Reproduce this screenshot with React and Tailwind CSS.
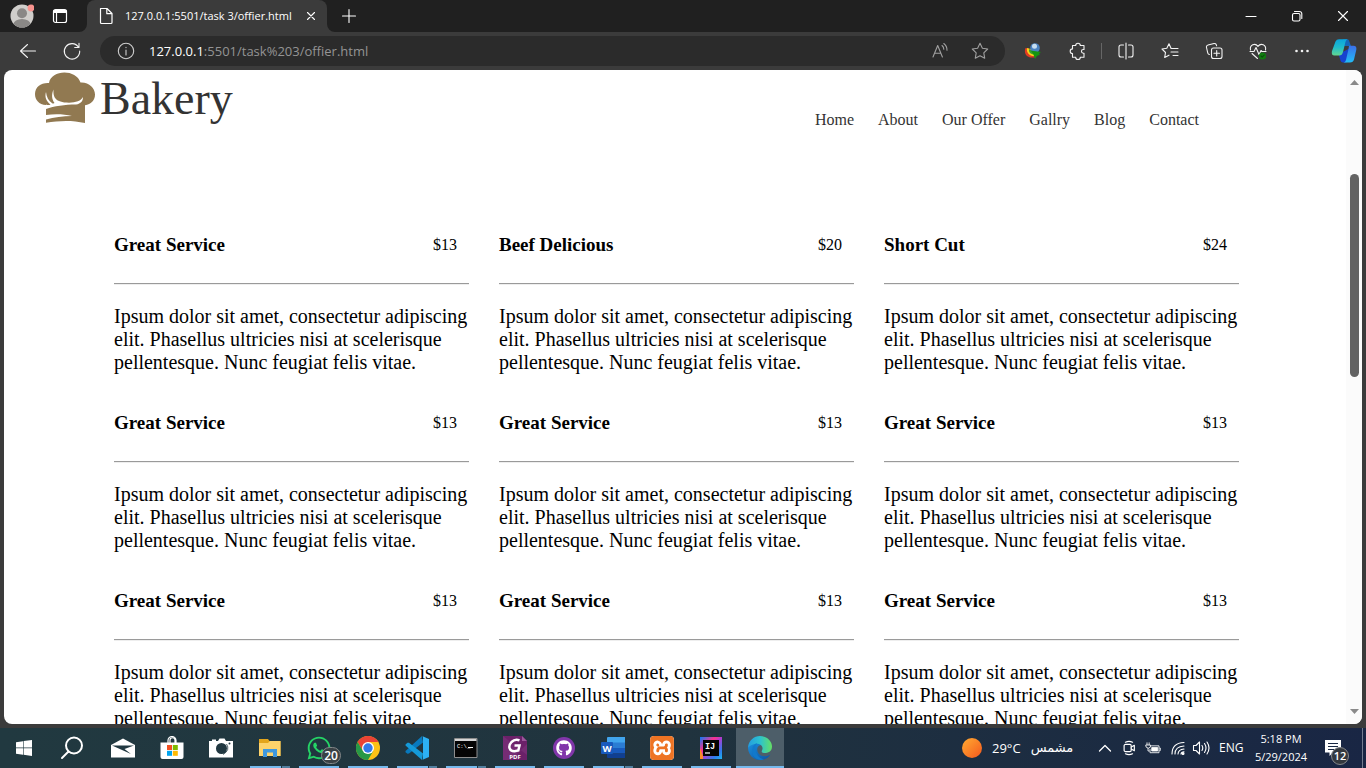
import React from "react";
import { FaGithub, FaWhatsapp } from "react-icons/fa";
import { SiXampp } from "react-icons/si";

const blurb =
  "Ipsum dolor sit amet, consectetur adipiscing elit. Phasellus ultricies nisi at scelerisque pellentesque. Nunc feugiat felis vitae.";

const offers = [
  ["Great Service", "$13"],
  ["Beef Delicious", "$20"],
  ["Short Cut", "$24"],
  ["Great Service", "$13"],
  ["Great Service", "$13"],
  ["Great Service", "$13"],
  ["Great Service", "$13"],
  ["Great Service", "$13"],
  ["Great Service", "$13"],
];

const navItems = ["Home", "About", "Our Offer", "Gallry", "Blog", "Contact"];

function Line({ children, className = "size-5", box = "0 0 20 20", width = 1.1 }) {
  return (
    <svg
      viewBox={box}
      className={className}
      fill="none"
      stroke="currentColor"
      strokeWidth={width}
      strokeLinecap="round"
      strokeLinejoin="round"
      aria-hidden="true"
    >
      {children}
    </svg>
  );
}

function IconButton({ label, className, children }) {
  return (
    <button type="button" aria-label={label} className={`flex shrink-0 items-center justify-center ${className}`}>
      {children}
    </button>
  );
}

function TabStrip() {
  return (
    <div className="flex h-8 shrink-0 bg-[#202020] text-white">
      <div className="flex w-[79px] shrink-0 items-center">
        <IconButton label="Profile" className="ml-2.5 size-6">
          <svg viewBox="0 0 24 24" className="size-6">
            <clipPath id="avatar">
              <circle cx="12" cy="12" r="11.5" />
            </clipPath>
            <circle cx="12" cy="12" r="11.5" fill="#d0cecb" />
            <g clipPath="url(#avatar)" fill="#8a8886">
              <circle cx="12" cy="9.2" r="5" />
              <ellipse cx="12" cy="20.5" rx="8.500" ry="5.500" />
            </g>
            <circle cx="21" cy="4" r="3.400" fill="#f8938e" />
          </svg>
        </IconButton>
        <IconButton label="Tab actions" className="ml-4 size-5">
          <Line className="size-5" width={1.2}>
            <rect x="3.500" y="3.500" width="13" height="13" rx="2" />
            <path d="M4.500 5.500h11" strokeWidth="3" />
            <path d="M6.500 7v9" />
          </Line>
        </IconButton>
      </div>
      <svg viewBox="0 0 8 8" className="size-2 shrink-0 self-end" fill="#3b3b3b">
        <path d="M8 0v8H0a8 8 0 0 0 8-8z" />
      </svg>
      <div className="flex w-60 shrink-0 items-center rounded-t-lg bg-[#3b3b3b] pr-2 pl-2.5">
        <Line className="size-[18px] shrink-0" box="0 0 18 18" width={1.2}>
          <path d="M3.500 1.500h6.500l5 5v9a1 1 0 0 1-1 1H4.500a1 1 0 0 1-1-1zM9.800 1.500v5.200H15" />
        </Line>
        <span className="ml-2.5 flex-1 text-[11px] leading-4 whitespace-nowrap">127.0.0.1:5501/task 3/offier.html</span>
        <IconButton label="Close tab" className="size-4">
          <Line className="size-4" box="0 0 16 16">
            <path d="M4.500 4.500l7 7M11.500 4.500l-7 7" />
          </Line>
        </IconButton>
      </div>
      <svg viewBox="0 0 8 8" className="size-2 shrink-0 self-end" fill="#3b3b3b">
        <path d="M0 0v8h8a8 8 0 0 1-8-8z" />
      </svg>
      <IconButton label="New tab" className="w-7">
        <Line className="size-4" box="0 0 16 16">
          <path d="M8 1.500v13M1.500 8h13" />
        </Line>
      </IconButton>
      <div className="flex-1" />
      <IconButton label="Minimize" className="w-[46px]">
        <Line className="size-3" box="0 0 12 12">
          <path d="M1 6.500h10" />
        </Line>
      </IconButton>
      <IconButton label="Restore" className="w-[46px]">
        <Line className="size-3" box="0 0 12 12">
          <rect x="1.500" y="3.500" width="7.500" height="7.500" rx="1.500" />
          <path d="M3.500 1.500H8.500a2.300 2.300 0 0 1 2.300 2.300V8.500" />
        </Line>
      </IconButton>
      <IconButton label="Close" className="w-[46px]">
        <Line className="size-3" box="0 0 12 12">
          <path d="M1.500 1.500l9 9M10.500 1.500l-9 9" />
        </Line>
      </IconButton>
    </div>
  );
}

const star =
  "M10 2.300l2.400 4.900 5.300.8-3.900 3.800.9 5.400L10 14.700l-4.700 2.500.9-5.400L2.300 8l5.300-.8z";

function Toolbar() {
  return (
    <div className="flex h-[38px] shrink-0 items-center bg-[#3b3b3b] text-[#f3f3f3]">
      <IconButton label="Back" className="ml-[17px] size-[22px]">
        <Line className="size-[22px]" box="0 0 22 22">
          <path d="M18.500 11H3.500M10.500 4.500L3.500 11l7 6.500" />
        </Line>
      </IconButton>
      <IconButton label="Refresh" className="ml-[22px] size-[22px]">
        <Line className="size-[22px]" box="0 0 22 22">
          <path d="M17.500 7.200A7.700 7.700 0 1 0 18.700 11M18 3.200v4.300h-4.300" />
        </Line>
      </IconButton>
      <div className="mr-3.5 ml-[17px] flex h-[30px] min-w-0 flex-1 items-center rounded-full bg-[#2b2b2b] pr-[15px] pl-4">
        <IconButton label="Site information" className="size-5 text-[#cfcfcf]">
          <Line>
            <circle cx="10" cy="10" r="7.700" />
            <path d="M10 9v5M10 6.200v.4" />
          </Line>
        </IconButton>
        <p className="ml-[13px] flex-1 truncate text-[13px] leading-5 text-[#949494]">
          <span className="text-white">127.0.0.1</span>:5501/task%203/offier.html
        </p>
        <IconButton label="Read aloud" className="size-5 text-[#a0a0a0]">
          <Line>
            <path d="M3 16L7.700 4.500 12.400 16M4.600 12.200h6.200M12 4.500c1.200.9 1.800 2.100 1.800 3.800M13.800 2.500c2 1.500 3.200 3.600 3.200 6.700" />
          </Line>
        </IconButton>
        <IconButton label="Add to favorites" className="ml-5 size-5 text-[#a0a0a0]">
          <Line>
            <path d={star} />
          </Line>
        </IconButton>
      </div>
      <IconButton label="Download manager" className="ml-1 size-5">
        <svg viewBox="0 0 20 20" className="size-5">
          <path d="M2.500 7C0 13 5 18.500 13 16l-1-4-4 .5-2-5z" fill="#e23c22" />
          <path d="M4 7c-1 5 3 8.500 8 8l-.5-3-3-1-1-3z" fill="#f8d21c" />
          <path d="M6 8c-.5 4 2 5.500 6 5.500l-.5-3-3-1z" fill="#3aa32a" />
          <circle cx="12" cy="7" r="4.800" fill="#4a82c0" />
          <circle cx="11.500" cy="5.300" r="2.500" fill="#c6def0" />
          <path d="M7.500 9.500l10.500 1.500-2 1.500 1 1-3 1.500-2 3-1.500-4.500z" fill="#169510" />
        </svg>
      </IconButton>
      <IconButton label="Extensions" className="ml-[25px] size-5">
        <Line>
          <path d="M7.700 4.500a2.300 2.300 0 0 1 4.600 0H16v4h-.7a1.800 1.800 0 0 0 0 3.700h.7v4h-3.700a2.300 2.300 0 0 1-4.600 0H4.500v-3.700a2.300 2.300 0 0 1 0-4.600V4.500z" />
        </Line>
      </IconButton>
      <div className="ml-[13px] h-4 w-px bg-[#666]" />
      <IconButton label="Split screen" className="ml-3.5 size-5">
        <Line>
          <path d="M7.500 4H5a2 2 0 0 0-2 2v8a2 2 0 0 0 2 2h2.500M12.500 4H15a2 2 0 0 1 2 2v8a2 2 0 0 1-2 2h-2.500M10 2v16" />
        </Line>
      </IconButton>
      <IconButton label="Favorites" className="ml-6 size-5">
        <Line>
          <path d="M11 7.300L9 2.800 6.800 7.200l-4.800.8 3.500 3.500-.8 5L9 14.200M11 7.500h7M11 11h7M13 14.500h5" />
        </Line>
      </IconButton>
      <IconButton label="Collections" className="ml-6 size-5">
        <Line>
          <rect x="7.500" y="7" width="10.500" height="10.500" rx="2" />
          <path d="M12.700 9.500v5.500M10 12.200h5.500M5.500 13.500a2 2 0 0 1-1.700-1.400L2.500 6.500A2 2 0 0 1 4 4l6-1.500a2 2 0 0 1 2.400 1.500l.2.800" />
        </Line>
      </IconButton>
      <IconButton label="Browser essentials" className="ml-6 size-5">
        <Line>
          <path d="M2.500 9C1.500 4 7 1.500 10 5.300 13 1.500 18.500 4 17.500 9M2 10.500h4l2-4 3 7 2-4 1 1h4M4 12.500l5.500 5" />
          <circle cx="14.500" cy="15" r="3.600" fill="#107c10" stroke="none" />
          <path d="M13 15l1.200 1.200 2-2.200" stroke="#0a4d0a" />
        </Line>
      </IconButton>
      <IconButton label="Settings and more" className="ml-6 size-5">
        <svg viewBox="0 0 20 20" className="size-5" fill="currentColor">
          <circle cx="4.500" cy="10" r="1.300" />
          <circle cx="10" cy="10" r="1.300" />
          <circle cx="15.500" cy="10" r="1.300" />
        </svg>
      </IconButton>
      <IconButton label="Copilot" className="mr-[9px] ml-[19px] size-[26px]">
        <svg viewBox="0 0 26 26" className="size-[26px]">
          <defs>
            <linearGradient id="copA" x1="0" y1="0" x2="0" y2="1">
              <stop offset="0" stopColor="#0aa5dd" />
              <stop offset=".5" stopColor="#20bccb" />
              <stop offset="1" stopColor="#62d68f" />
            </linearGradient>
            <linearGradient id="copB" x1="0" y1="0" x2="0" y2="1">
              <stop offset="0" stopColor="#3b6fe8" />
              <stop offset="1" stopColor="#22bdf7" />
            </linearGradient>
          </defs>
          <path d="M7.500 16l2 6.500q.6 2 2.500 2h3.500l3-14z" fill="#1743cf" />
          <path d="M13 8h7l-2-5.500q-.5-1.200-2-1.200h-4z" fill="#1467b9" />
          <path d="M4.500 3.500Q5.500 1.200 8 1.200h8.500q-1.500.5-2 2.500L12 14q-.8 3.500-4 3.500H3.500Q0 17.500 1 13z" fill="url(#copA)" />
          <path d="M18 7.800h4.500q3.500 0 2.800 4L23 21.500q-.8 3-4 3h-6.500q2-.5 2.500-2.500L17.500 11z" fill="url(#copB)" />
        </svg>
      </IconButton>
    </div>
  );
}

function BakeryLogo() {
  return (
    <a href="#home" aria-label="Bakery" className="flex items-center">
      <svg viewBox="0 0 62 53" className="h-[53px] w-[62px]" fill="#917951">
        <path d="M15 11C17-2.500 42-3.500 46.500 10.500 55 10 61 16 61 22.500c0 6-4 10-10 10.800V51c-13-3-26-2.500-39-.2V33C5 32.500 1 28 1 22 1 15 7 10.500 15 11z" />
        <path
          d="M19.500 17.500C19 25 21 30.500 35 30.700c7 0 12-2 14-5.700 0 4-2 6.800-7 7.500-11 0-22 1.500-30 4.500v-4.500c1.500.8 3 .8 4.500 0C12 29 10.500 25 12 20c.5 5 2.500 9 6.500 11.500q1 0 2-.5c-3-4-3-9-1-13.500z"
          fill="#fff"
        />
        <path d="M12 43c9-1.500 18-1 26 1-9 .3-18 1.300-26 3.500z" fill="#fff" />
      </svg>
      <span className="ml-1 font-['Liberation_Serif',serif] text-[46px] leading-[52px] text-[#333]">Bakery</span>
    </a>
  );
}

function OfferCard({ title, price }) {
  return (
    <article>
      <div className="flex items-center justify-between pr-3">
        <h3 className="text-[19px] leading-[22px] font-bold">{title}</h3>
        <span className="text-base leading-[22px]">{price}</span>
      </div>
      <hr className="mt-[27px] mb-5 h-0.5 border-t border-b border-t-[#9a9a9a] border-b-[#eee]" />
      <p className="text-[20px] leading-[23px]">{blurb}</p>
    </article>
  );
}

function WebPage() {
  return (
    <div className="flex min-h-0 flex-1 overflow-hidden rounded-lg bg-white">
      <div className="min-w-0 flex-1 overflow-hidden font-['Liberation_Serif',serif] text-black">
        <header className="flex items-start justify-between pt-0.5 pr-[147px] pl-[30px]">
          <BakeryLogo />
          <nav className="flex gap-6 pt-9 text-base leading-6 text-[#333]">
            {navItems.map((n) => (
              <a key={n} href="#offer">
                {n}
              </a>
            ))}
          </nav>
        </header>
        <main className="grid grid-cols-3 gap-x-[30px] gap-y-[38px] pt-[102px] pr-[107px] pl-[110px]">
          {offers.map(([title, price], i) => (
            <OfferCard key={i} title={title} price={price} />
          ))}
        </main>
      </div>
      <div className="flex w-4 shrink-0 flex-col items-center bg-[#fbfbfb] py-2.5">
        <svg viewBox="0 0 9 5" className="h-[5px] w-[9px]" fill="#8a8a8a">
          <path d="M4.500 0L9 5H0z" />
        </svg>
        <div className="flex w-[9px] flex-1 flex-col pt-[89px]">
          <div className="h-[203px] rounded-full bg-[#636363]" />
        </div>
        <svg viewBox="0 0 9 5" className="h-[5px] w-[9px]" fill="#8a8a8a">
          <path d="M4.500 5L9 0H0z" />
        </svg>
      </div>
    </div>
  );
}

function Windows() {
  return (
    <svg viewBox="0 0 16 16" className="size-4" fill="#fff">
      <path d="M0 2.200L7 1.200v6.400H0zM7.600 1.100L16 0v7.600H7.600zM0 8.300h7v6.400l-7-1zM7.600 8.300H16V16l-8.400-1.200z" />
    </svg>
  );
}

function Search() {
  return (
    <Line className="size-6 text-white" box="0 0 24 24" width={2}>
      <circle cx="14" cy="9.500" r="8" />
      <path d="M8.500 15.500L2 22" />
    </Line>
  );
}

function Mail() {
  return (
    <svg viewBox="0 0 24 20" className="h-5 w-6" fill="#fff">
      <path d="M0 7L12 .5 24 7v12.500H0z" />
      <path d="M1 7.500h22L13.500 11l6.500 5z" fill="#213841" />
    </svg>
  );
}

function Store() {
  return (
    <svg viewBox="0 0 24 24" className="size-6">
      <path d="M8 8V4.500a4 4 0 0 1 8 0V8M10 7V4c0-3 5-3 5 0v3" fill="none" stroke="#fff" strokeWidth="1.200" />
      <path d="M.5 6.500h23V21q0 2-2 2h-19q-2 0-2-2z" fill="#fff" />
      <path d="M7 9h5v5H7z" fill="#f25022" />
      <path d="M12.800 9h5v5h-5z" fill="#7fba00" />
      <path d="M7 14.800h5v5H7z" fill="#00a4ef" />
      <path d="M12.800 14.800h5v5h-5z" fill="#ffb900" />
    </svg>
  );
}

function Camera() {
  return (
    <svg viewBox="0 0 24 20" className="h-5 w-6">
      <path d="M0 3h3V1.500h4V3h2L10.500.500h5L17 3h7v16.500H0z" fill="#fff" />
      <circle cx="12.500" cy="10.500" r="5.500" fill="#213841" />
      <path d="M17.500 6q4 6-3.500 10.500" fill="none" stroke="#213841" strokeWidth=".8" />
      <circle cx="20.500" cy="5.500" r="1" fill="#213841" />
    </svg>
  );
}

function Folder() {
  return (
    <svg viewBox="0 0 22 20" className="h-5 w-[22px]">
      <path d="M0 1h9l1.500 2H21.500v15H0z" fill="#e3a51c" />
      <path d="M0 5l9 0 2-2h10.500v15H0z" fill="#fdd36b" />
      <path d="M4 19v-8h14v8h-4v-4.500H8V19z" fill="#3f98dd" />
    </svg>
  );
}

function WhatsApp() {
  return (
    <span className="relative flex">
      <FaWhatsapp className="size-[26px] text-[#25d366]" />
      <span className="absolute top-3 left-[15px] flex h-[17px] w-5 items-center justify-center rounded-full border border-[#84888a] bg-[#3a4145] text-[12px] leading-4 font-semibold text-white">
        20
      </span>
    </span>
  );
}

function Chrome() {
  return (
    <svg viewBox="0 0 24 24" className="size-6">
      <circle cx="12" cy="12" r="12" fill="#fbc116" />
      <path d="M1.600 6A12 12 0 0 1 22.400 6H12L7 15z" fill="#ea4335" />
      <path d="M1.600 6A12 12 0 0 0 12 24l5.200-9L7 15z" fill="#279847" />
      <circle cx="12" cy="12" r="6" fill="#fff" />
      <circle cx="12" cy="12" r="4.700" fill="#3279ea" />
    </svg>
  );
}

function VsCode() {
  return (
    <svg viewBox="0 0 24 24" className="size-6">
      <path d="M17 0l1 6.500L4 17.500l-1.500.2L.5 16.200v-1.200L17 0z" fill="#0879bd" />
      <path d="M.5 8.500l2-1.700H4L18 17.500l-1 6.500L.5 9.500z" fill="#159ad8" />
      <path d="M17 0l7 3v18l-7 3q1 0 1-2V2q0-2-1-2z" fill="#2db1f4" />
    </svg>
  );
}

function Terminal() {
  return (
    <svg viewBox="0 0 24 20" className="h-5 w-6">
      <path d="M.5.500h22.500v19H.500z" fill="#050505" stroke="#8e8e8e" />
      <path d="M1 1h21.500v2H1z" fill="#d6d6d6" />
      <text x="3" y="9.500" fill="#fff" fontSize="5.500" fontFamily="Liberation Mono, monospace">C:\_</text>
      <path d="M14 9.500h5" stroke="#fff" />
    </svg>
  );
}

function PdfEditor() {
  return (
    <svg viewBox="0 0 24 24" className="size-6">
      <path d="M0 0h19l5 5v19H0z" fill="#6b2169" />
      <path d="M19 0v5h5z" fill="#9c569b" />
      <path d="M0 0l24 19V8L8 24H0z" fill="#8b438a" opacity=".35" />
      <path d="M16.500 4.300Q12 2.500 8.500 6c-4 4.500-2 9.500 3 9.300l3.800-.8 1.200-5h-5" fill="none" stroke="#fff" strokeWidth="2.500" />
      <text x="12" y="22.500" textAnchor="middle" fill="#fff" fontSize="6" fontWeight="bold" fontFamily="Open Sans, sans-serif">PDF</text>
    </svg>
  );
}

function GitHub() {
  return (
    <span className="flex size-[22px] items-center justify-center rounded-full bg-[#8136aa]">
      <FaGithub className="size-4 text-white" />
    </span>
  );
}

function Word() {
  return (
    <svg viewBox="0 0 24 22" className="h-[22px] w-6">
      <path d="M6 1q0-1 1-1h17v6H6z" fill="#41a5ee" />
      <path d="M6 5.500h18V11H6z" fill="#2b7cd3" />
      <path d="M6 11h18v5.500H6z" fill="#185abd" />
      <path d="M6 16.500h18V21H7q-1 0-1-1z" fill="#103f91" />
      <rect y="5" width="12" height="12" rx="1" fill="#185abd" />
      <text x="6" y="14.500" textAnchor="middle" fill="#fff" fontSize="9.500" fontWeight="bold" fontFamily="Open Sans, sans-serif">W</text>
    </svg>
  );
}

function Xampp() {
  return (
    <span className="flex size-6 items-center justify-center overflow-hidden rounded-sm bg-white">
      <SiXampp className="size-6 text-[#ee7424]" />
    </span>
  );
}

function IntelliJ() {
  return (
    <svg viewBox="0 0 22 22" className="size-[22px]">
      <defs>
        <linearGradient id="ij" x1="0" y1="0" x2="1" y2="1">
          <stop offset="0" stopColor="#087cfa" />
          <stop offset=".35" stopColor="#fc318c" />
          <stop offset=".5" stopColor="#b03bd0" />
          <stop offset=".8" stopColor="#2b7fef" />
          <stop offset="1" stopColor="#21b7ee" />
        </linearGradient>
      </defs>
      <path d="M0 0h22v22H0z" fill="url(#ij)" />
      <path d="M0 11l3 8v3H0z" fill="#fd8a28" />
      <path d="M3 3h16v16H3z" fill="#050505" />
      <text x="5" y="11.500" fill="#fff" fontSize="8.500" fontWeight="bold" fontFamily="Liberation Mono, monospace">IJ</text>
      <path d="M5 16h5" stroke="#fff" strokeWidth="1.200" />
    </svg>
  );
}

function Edge() {
  return (
    <svg viewBox="0 0 24 24" className="size-6">
      <defs>
        <linearGradient id="edgeTop" x1="0" y1=".5" x2="1" y2=".5">
          <stop offset="0" stopColor="#249de0" />
          <stop offset=".5" stopColor="#2cc2cf" />
          <stop offset="1" stopColor="#65df65" />
        </linearGradient>
        <linearGradient id="edgeLow" x1="0" y1="0" x2="1" y2="1">
          <stop offset="0" stopColor="#1b91df" />
          <stop offset="1" stopColor="#0b51a3" />
        </linearGradient>
      </defs>
      <path d="M0 11.500C2 6 11 3.500 14 9c-5 0-6 5-3.500 8.500 3 3.500 8 3.500 12 1C18 26 6 26 1.700 18Q0 15 0 11.500z" fill="url(#edgeLow)" />
      <path d="M0 11.500C.5 4.500 6 0 12 0c7 0 12 5 12 10.500 0 5-4 6.500-7.500 6.500-2 0-3.500-1-2.500-2.500C17 9 8 4 0 11.500z" fill="url(#edgeTop)" />
      <path d="M4.500 12Q5 9 9 7q-4 6 1 13 3 4 7 3-8 3-12-4-1-3-.5-7z" fill="#1179cc" />
    </svg>
  );
}

const apps = [
  ["Mail", Mail, "none"],
  ["Microsoft Store", Store, "none"],
  ["Camera", Camera, "none"],
  ["File Explorer", Folder, "many"],
  ["WhatsApp", WhatsApp, "one"],
  ["Chrome", Chrome, "one"],
  ["Visual Studio Code", VsCode, "many"],
  ["Command Prompt", Terminal, "many"],
  ["PDF Editor", PdfEditor, "one"],
  ["GitHub Desktop", GitHub, "one"],
  ["Word", Word, "many"],
  ["XAMPP", Xampp, "one"],
  ["IntelliJ IDEA", IntelliJ, "one"],
  ["Microsoft Edge", Edge, "active"],
];

function AppButton({ name, Icon, state }) {
  return (
    <button
      type="button"
      aria-label={name}
      className={`flex w-12 shrink-0 flex-col items-center ${state === "active" ? "bg-[#4d5e69]" : ""}`}
    >
      <span className="flex flex-1 items-center pt-0.5">
        <Icon />
      </span>
      <span className={`flex h-0.5 ${state === "active" ? "w-12" : "w-10"}`}>
        {state !== "none" && <span className="flex-1 bg-[#76b9ed]" />}
        {state === "many" && <span className="ml-px w-2 bg-[#527f9f]" />}
      </span>
    </button>
  );
}

function Taskbar() {
  return (
    <footer className="flex h-10 shrink-0 bg-linear-to-r from-[#213940] via-[#20333e] to-[#192644] text-white">
      <IconButton label="Start" className="w-12">
        <Windows />
      </IconButton>
      <IconButton label="Search" className="mr-[3px] w-12">
        <Search />
      </IconButton>
      <div className="flex gap-px">
        {apps.map(([name, Icon, state]) => (
          <AppButton key={name} name={name} Icon={Icon} state={state} />
        ))}
      </div>
      <div className="flex-1" />
      <button type="button" className="flex items-center text-[13px] leading-4 whitespace-nowrap">
        <span className="size-5 rounded-full bg-linear-to-br from-[#ffab32] to-[#f2541d]" />
        <span className="ml-2.5 w-[38px] text-left">29°C</span>
        <span lang="ar" dir="rtl" className="w-11 font-['DejaVu_Sans',sans-serif]">
          مشمس
        </span>
      </button>
      <IconButton label="Show hidden icons" className="ml-[21px] w-5">
        <Line className="size-4" box="0 0 16 16" width={1.300}>
          <path d="M2.500 11L8 5.500l5.500 5.500" />
        </Line>
      </IconButton>
      <IconButton label="Meet now" className="ml-1 w-5">
        <Line className="size-4" box="0 0 18 18" width={1.300}>
          <path d="M5 2.500q4-2 8 0M5 15.500q4 2 8 0" />
          <rect x="3.500" y="5" width="8" height="8" rx="1.500" />
          <path d="M11.500 8L15 6v6l-3.500-2" />
        </Line>
      </IconButton>
      <IconButton label="Battery" className="ml-1 w-5">
        <svg viewBox="0 0 18 14" className="h-3 w-4" fill="none" stroke="#fff">
          <path d="M6 4.500h10v8H5.500V8M16.500 7h1v3h-1" />
          <path d="M7.500 6.500h7v4h-7z" fill="#fff" />
          <path d="M2 .500v3M4.500.500v3M.500 3.500H6V6Q3.500 8.500 1 6zM3.200 7v3.500H5" />
        </svg>
      </IconButton>
      <IconButton label="Network" className="ml-[5px] w-5">
        <Line className="size-4" box="0 0 16 16" width={1.100}>
          <path d="M2 14Q2 3 14 2.500M5 14q0-7.500 9-8M8 14q.3-4.500 6-5M11 14q.3-2 3-2.200" />
          <circle cx="13" cy="13.500" r="1" fill="#fff" />
        </Line>
      </IconButton>
      <IconButton label="Volume" className="ml-[3px] w-5">
        <Line className="size-[18px]" box="0 0 18 18" width={1.100}>
          <path d="M1.500 6.500H4L7.500 3v12L4 11.500H1.500zM10 6.500q1.500 2.500 0 5M12.500 4.500q3 4.500 0 9M15 3q4 6 0 12" />
        </Line>
      </IconButton>
      <button type="button" className="ml-2 w-6 text-center text-[12px] leading-4">
        ENG
      </button>
      <button type="button" className="ml-1.5 w-16 text-center text-[11px] leading-[18px] whitespace-nowrap">
        <time className="block">5:18 PM</time>
        <time className="block">5/29/2024</time>
      </button>
      <IconButton label="Notifications" className="mr-[13px] ml-1 w-8">
        <span className="relative flex">
          <svg viewBox="0 0 16 18" className="h-[18px] w-4">
            <path d="M0 1h16v12.500H8L4.500 17v-3.500H0z" fill="#fff" />
            <path d="M3 4.500h10M3 7.500h10M3 10.500h6" stroke="#1a2944" />
          </svg>
          <span className="absolute top-2 left-1.5 flex size-[18px] items-center justify-center rounded-full border border-[#85878a] bg-[#33383e] text-[11px] leading-4 font-semibold">
            12
          </span>
        </span>
      </IconButton>
      <div className="mr-[3px] w-px shrink-0 bg-[#737c8f]" />
    </footer>
  );
}

export default function App() {
  return (
    <div className="flex h-screen flex-col overflow-hidden bg-[#3b3b3b] font-['Open_Sans','Noto_Sans',sans-serif]">
      <TabStrip />
      <Toolbar />
      <div className="flex min-h-0 flex-1 px-1 pb-1">
        <WebPage />
      </div>
      <Taskbar />
    </div>
  );
}
